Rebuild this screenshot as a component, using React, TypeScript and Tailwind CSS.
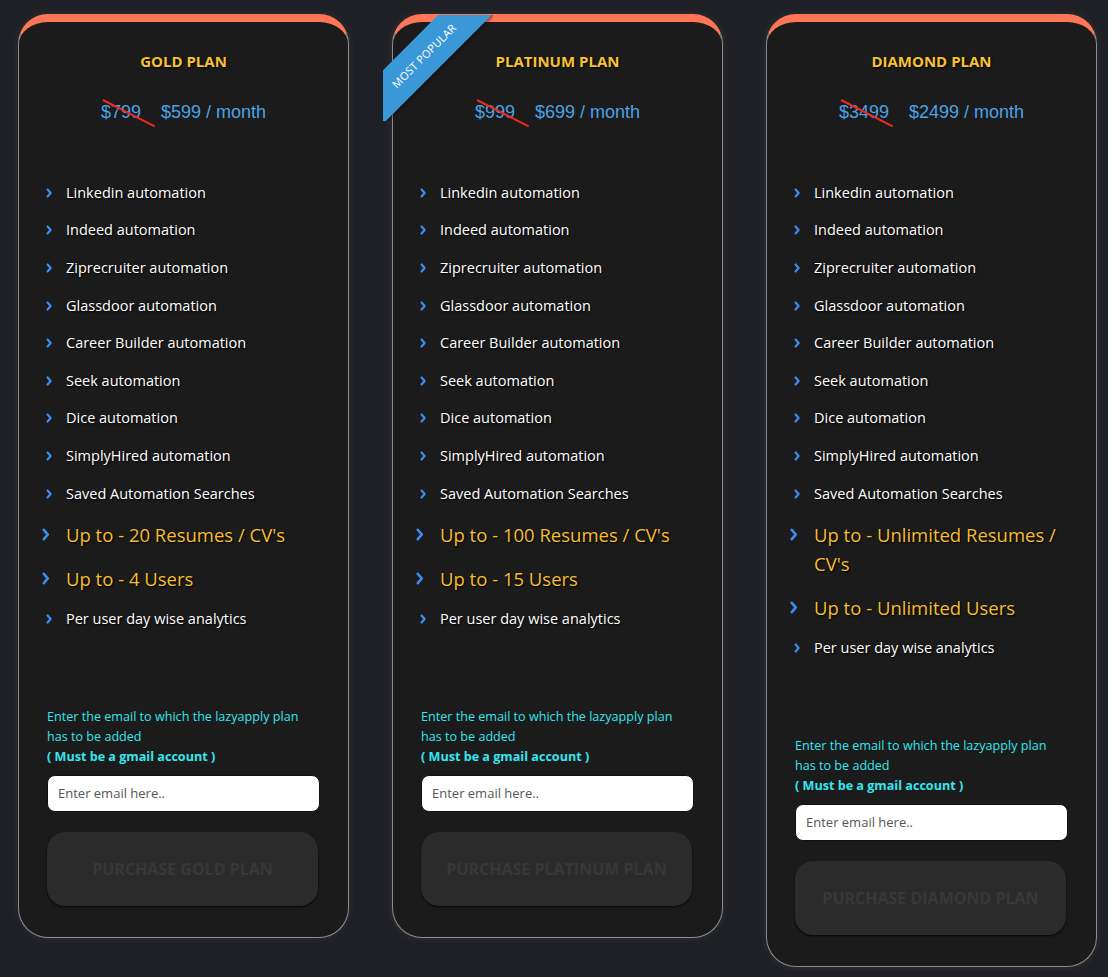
import type { ReactNode } from "react";

type Plan = {
  name: string;
  oldPrice: string;
  price: string;
  resumes: string;
  users: string;
  popular?: boolean;
};

const plans: Plan[] = [
  { name: "GOLD", oldPrice: "$799", price: "$599", resumes: "20 Resumes / CV's", users: "4 Users" },
  { name: "PLATINUM", oldPrice: "$999", price: "$699", resumes: "100 Resumes / CV's", users: "15 Users", popular: true },
  { name: "DIAMOND", oldPrice: "$3499", price: "$2499", resumes: "Unlimited Resumes / CV's", users: "Unlimited Users" },
];

const features = [
  "Linkedin automation",
  "Indeed automation",
  "Ziprecruiter automation",
  "Glassdoor automation",
  "Career Builder automation",
  "Seek automation",
  "Dice automation",
  "SimplyHired automation",
  "Saved Automation Searches",
];

function Chevron({ big }: { big?: boolean }) {
  return big ? (
    <svg aria-hidden="true" className="ml-[-5px] h-[13px] w-[8px]" viewBox="0 0 8 13" fill="none">
      <path d="M1.8 1.8l4 4.7-4 4.7" stroke="#3b8ef0" strokeWidth="2.6" strokeLinecap="round" strokeLinejoin="round" />
    </svg>
  ) : (
    <svg aria-hidden="true" className="ml-[-1px] h-[10px] w-[7px]" viewBox="0 0 7 10" fill="none">
      <path d="M1.6 1.5l3 3.5-3 3.5" stroke="#3b8ef0" strokeWidth="2.2" strokeLinecap="round" strokeLinejoin="round" />
    </svg>
  );
}

function Feature({ children, big }: { children: ReactNode; big?: boolean }) {
  return (
    <li
      className={`flex items-start ${
        big
          ? "py-[7.5px] text-[18.5px] leading-[29px] text-[#f6bd32]"
          : "py-[7.8px] text-[14.5px] leading-[22px] text-white"
      } [text-shadow:1px_1px_2px_#000]`}
    >
      <span className={`flex w-[19px] shrink-0 items-center ${big ? "h-[29px]" : "h-[22px]"}`}>
        <Chevron big={big} />
      </span>
      <span>{children}</span>
    </li>
  );
}

function PlanCard({ plan }: { plan: Plan }) {
  return (
    <div className="relative w-[331px] shrink-0 rounded-[30px] border border-t-[8px] border-[#8d8d8d] border-t-[#ff7656] bg-[#1b1b1b] px-[28px] pb-[31px] pt-[29px] shadow-[0_0_8px_rgba(255,255,255,0.08)]">
      {plan.popular && (
        <div className="absolute left-[-10px] top-[-7px] h-[106px] w-[110px] overflow-hidden">
          <div className="absolute left-[-59px] top-[22px] flex h-[38px] w-[200px] -rotate-45 items-center justify-center bg-[#3a98d8] text-[11px] tracking-[0.2px] text-white shadow-[0_2px_3px_rgba(0,0,0,0.4)]">
            MOST POPULAR
          </div>
        </div>
      )}

      <h2 className="text-center text-[15px] font-bold leading-[20px] text-[#f8c232] [text-shadow:1px_1px_2px_#000]">
        {plan.name} PLAN
      </h2>

      <div className="mt-[29px] flex justify-center gap-[20px] font-['Liberation_Sans',Arial,sans-serif] text-[18px] leading-[24px] text-[#4ba2e6]">
        <span className="relative">
          {plan.oldPrice}
          <span className="absolute left-[2px] top-[-1px] h-[2px] w-[58px] origin-left rotate-[27deg] bg-[#ee2a1f]" />
        </span>
        <span>{plan.price} / month</span>
      </div>

      <ul className="mt-[50px]">
        {features.map((f) => (
          <Feature key={f}>{f}</Feature>
        ))}
        <Feature big>Up to - {plan.resumes}</Feature>
        <Feature big>Up to - {plan.users}</Feature>
        <Feature>Per user day wise analytics</Feature>
      </ul>

      <p className="mt-[69px] text-[12.6px] leading-[20px] text-[#35e6ee]">
        Enter the email to which the lazyapply plan
        <br />
        has to be added
        <br />
        <span className="font-bold">( Must be a gmail account )</span>
      </p>

      <input
        className="mt-[8px] h-[37px] w-full rounded-[8px] border border-[#111] bg-white px-[10px] text-[13px] text-[#333] outline-none placeholder:text-[#555]"
        placeholder="Enter email here.."
        type="email"
      />

      <button
        className="mt-[20px] flex h-[74px] w-[271px] items-center justify-center rounded-[18px] bg-[#2b2b2b] text-[16px] font-bold text-[#383838] shadow-[0_1px_2px_rgba(0,0,0,0.9)]"
        disabled
        type="button"
      >
        PURCHASE {plan.name} PLAN
      </button>
    </div>
  );
}

export default function App() {
  return (
    <div className="min-h-screen bg-[#1f2025] font-['Open_Sans','Noto_Sans',sans-serif]">
      <div className="flex items-start gap-[43px] pl-[18px] pt-[14px]">
        {plans.map((p) => (
          <PlanCard key={p.name} plan={p} />
        ))}
      </div>
    </div>
  );
}
